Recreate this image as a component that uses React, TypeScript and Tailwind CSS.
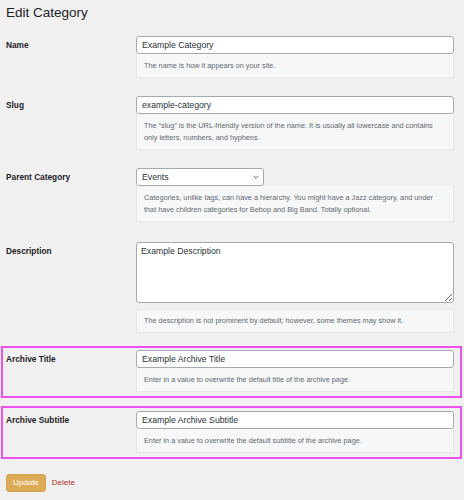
import type { ReactNode } from "react";

function Help({ children }: { children: ReactNode }) {
  return (
    <div className="rounded-b-[2px] border border-t-0 border-[#e6e6e6] bg-[#f6f7f7] px-[7px] pt-[6px] pb-[5px] text-[7.3px] leading-[12px] text-[#646970]">
      {children}
    </div>
  );
}

function TextInput({ value }: { value: string }) {
  return (
    <input
      type="text"
      defaultValue={value}
      className="block h-[18px] w-full rounded-[3px] border border-[#a7aaad] bg-white px-[5px] text-[8.7px] text-[#2c3338] outline-none"
    />
  );
}

function Row({
  label,
  children,
  highlight = false,
  className = "",
}: {
  label: string;
  children: ReactNode;
  highlight?: boolean;
  className?: string;
}) {
  if (highlight) {
    return (
      <div className={`ml-[1px] mr-[2px] flex border-2 border-[#ed52ed] pb-[4px] ${className}`}>
        <div className="w-[133px] shrink-0 pl-[3px] text-[8.3px] font-bold leading-[18px] text-[#1d2327]">
          {label}
        </div>
        <div className="min-w-0 flex-1 pr-[6px]">{children}</div>
      </div>
    );
  }
  return (
    <div className={`flex ${className}`}>
      <div className="w-[136px] shrink-0 pl-[6px] text-[8.3px] font-bold leading-[18px] text-[#1d2327]">
        {label}
      </div>
      <div className="min-w-0 flex-1 pr-[10px]">{children}</div>
    </div>
  );
}

export default function App() {
  return (
    <div className="min-h-[500px] w-full bg-[#f0f0f1] font-['Liberation_Sans',Arial,sans-serif]">
      <h1 className="px-[6px] pt-[3px] text-[13.5px] leading-[20px] text-[#1d2327]">Edit Category</h1>

      <Row label="Name" className="mt-[13px]">
        <TextInput value="Example Category" />
        <Help>The name is how it appears on your site.</Help>
      </Row>

      <Row label="Slug" className="mt-[18px]">
        <TextInput value="example-category" />
        <Help>
          The “slug” is the URL-friendly version of the name. It is usually all lowercase and contains
          only letters, numbers, and hyphens.
        </Help>
      </Row>

      <Row label="Parent Category" className="mt-[18px]">
        <div className="relative h-[18px] w-[128px]">
          <select
            defaultValue="events"
            className="block h-[18px] w-full appearance-none rounded-[3px] border border-[#a7aaad] bg-white pl-[5px] text-[8.7px] leading-[16px] text-[#2c3338] outline-none"
          >
            <option value="events">Events</option>
          </select>
          <svg
            viewBox="0 0 10 10"
            className="pointer-events-none absolute right-[5px] top-[6px] h-[6px] w-[6px]"
            fill="none"
            stroke="#50575e"
            strokeWidth="1.6"
          >
            <path d="M1.5 3.5 5 7l3.5-3.5" />
          </svg>
        </div>
        <Help>
          Categories, unlike tags, can have a hierarchy. You might have a Jazz category, and under
          that have children categories for Bebop and Big Band. Totally optional.
        </Help>
      </Row>

      <Row label="Description" className="mt-[20px]">
        <textarea
          defaultValue="Example Description"
          className="block h-[61px] w-full rounded-[3px] border border-[#a7aaad] bg-white px-[4px] pt-[2px] text-[8.7px] leading-[12px] text-[#2c3338] outline-none"
        />
        <div className="mt-[6px] rounded-[2px] border border-[#e6e6e6] bg-[#f6f7f7] px-[7px] pt-[5px] pb-[5px] text-[7.3px] leading-[12px] text-[#646970]">
          The description is not prominent by default; however, some themes may show it.
        </div>
      </Row>

      <Row label="Archive Title" highlight className="mt-[13px] pt-[2px]">
        <TextInput value="Example Archive Title" />
        <Help>Enter in a value to overwrite the default title of the archive page.</Help>
      </Row>

      <Row label="Archive Subtitle" highlight className="mt-[8px] pt-[3px]">
        <TextInput value="Example Archive Subtitle" />
        <Help>Enter in a value to overwrite the default subtitle of the archive page.</Help>
      </Row>

      <div className="mt-[15px] flex items-center px-[6px]">
        <button
          type="button"
          className="h-[18px] rounded-[3px] border border-[#d5a24b] bg-[#dcab56] px-[6px] text-[8px] leading-[16px] text-white"
        >
          Update
        </button>
        <a href="#" className="ml-[6px] text-[8px] text-[#b32d2e]">
          Delete
        </a>
      </div>
    </div>
  );
}
